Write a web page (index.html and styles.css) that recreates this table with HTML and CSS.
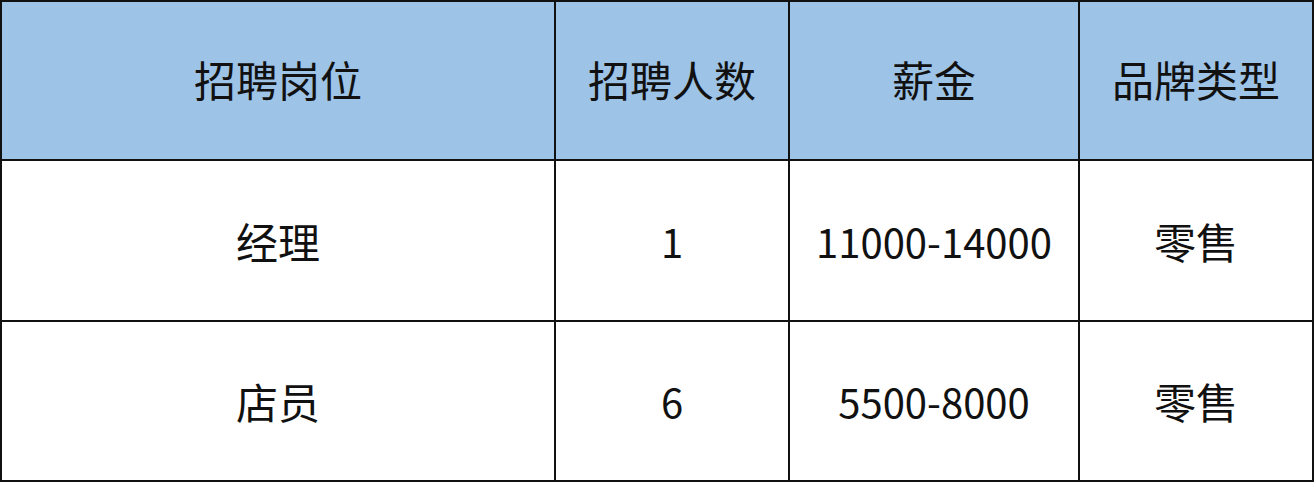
FILE: index.html
```html
<!DOCTYPE html>
<html lang="zh-CN">
<head>
<meta charset="utf-8">
<link rel="stylesheet" href="styles.css">
</head>
<body>
<div class="jobs">
  <div class="cell head">招聘岗位</div>
  <div class="cell head">招聘人数</div>
  <div class="cell head">薪金</div>
  <div class="cell head">品牌类型</div>

  <div class="cell">经理</div>
  <div class="cell num">1</div>
  <div class="cell num">11000-14000</div>
  <div class="cell">零售</div>

  <div class="cell">店员</div>
  <div class="cell num">6</div>
  <div class="cell num">5500-8000</div>
  <div class="cell">零售</div>
</div>
</body>
</html>
```
FILE: styles.css
```css
html, body {
  margin: 0;
  padding: 0;
  background: #ffffff;
}
.jobs {
  width: 1314px;
  height: 482px;
  box-sizing: border-box;
  padding: 2px;
  display: grid;
  grid-template-columns: 552px 232px 288px 232px;
  grid-template-rows: 157px 159px 158px;
  gap: 2px;
  background: #111111;
  font-family: "Noto Sans CJK SC", "Noto Sans", sans-serif;
  color: #111111;
}
.cell {
  background: #ffffff;
  display: flex;
  align-items: center;
  justify-content: center;
  font-size: 42px;
  font-weight: 400;
  line-height: 1;
}
.cell.head {
  background: #9dc3e6;
  font-weight: 400;
  padding-bottom: 4px;
}
.cell.num {
  font-size: 40px;
}
```
